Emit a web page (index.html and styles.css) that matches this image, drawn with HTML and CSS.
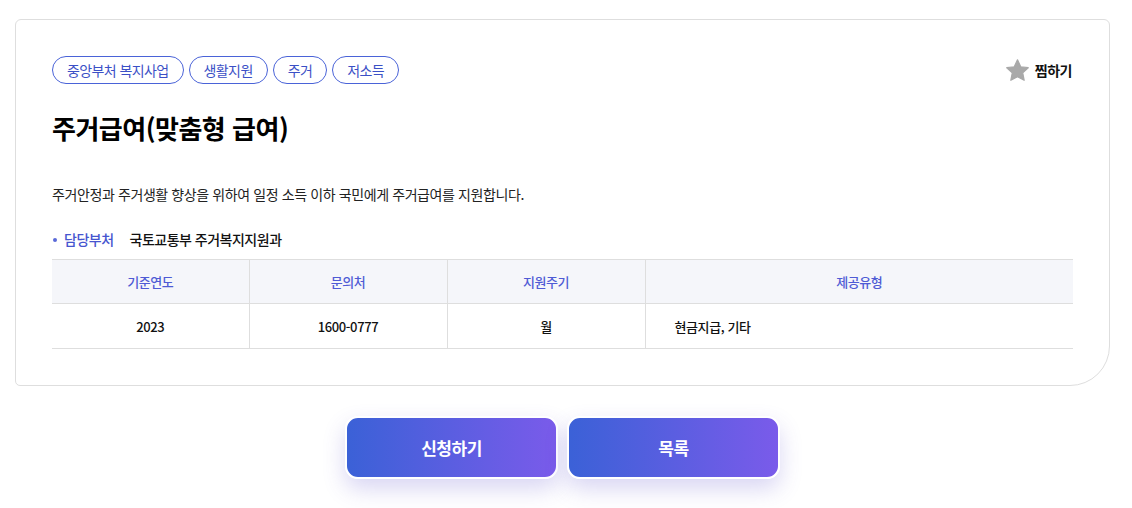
FILE: index.html
```html
<!DOCTYPE html>
<html lang="ko">
<head>
<meta charset="utf-8">
<link rel="stylesheet" href="styles.css">
</head>
<body>
<div class="page">
  <section class="card">
    <div class="top-row">
      <ul class="tags">
        <li class="tag">중앙부처 복지사업</li>
        <li class="tag">생활지원</li>
        <li class="tag">주거</li>
        <li class="tag">저소득</li>
      </ul>
      <button class="fav">
        <svg class="star" viewBox="0 0 24 24" width="25" height="25"><path d="M12 1.8l3.1 6.6 7.2.9-5.3 5 1.4 7.1L12 17.9l-6.4 3.5 1.4-7.1-5.3-5 7.2-.9z" fill="#a9a9a9" stroke="#a9a9a9" stroke-width="1.2" stroke-linejoin="round"/></svg>
        <span>찜하기</span>
      </button>
    </div>
    <h1 class="title">주거급여(맞춤형 급여)</h1>
    <p class="desc">주거안정과 주거생활 향상을 위하여 일정 소득 이하 국민에게 주거급여를 지원합니다.</p>
    <div class="dept">
      <span class="dept-label">담당부처</span>
      <span class="dept-value">국토교통부 주거복지지원과</span>
    </div>
    <table class="info">
      <thead>
        <tr><th class="c1">기준연도</th><th class="c2">문의처</th><th class="c3">지원주기</th><th class="c4">제공유형</th></tr>
      </thead>
      <tbody>
        <tr><td>2023</td><td>1600-0777</td><td>월</td><td class="left">현금지급, 기타</td></tr>
      </tbody>
    </table>
  </section>
  <div class="actions">
    <button class="btn">신청하기</button>
    <button class="btn">목록</button>
  </div>
</div>
</body>
</html>
```
FILE: styles.css
```css
* { box-sizing: border-box; }
html, body { margin: 0; padding: 0; background: #fff; }
body {
  font-family: "Noto Sans CJK KR", "Noto Sans", sans-serif;
  color: #111;
  min-height: 508px;
}
.page {
  width: 1095px;
  margin: 19px 0 0 15px;
  padding-bottom: 30px;
}
.card {
  border: 1px solid #dedede;
  border-radius: 6px 6px 40px 5px;
  padding: 36px;
  background: #fff;
}
.top-row {
  display: flex;
  justify-content: space-between;
  align-items: center;
}
.tags {
  display: flex;
  gap: 5px;
  list-style: none;
  margin: 0;
  padding: 0;
}
.tag {
  height: 28px;
  line-height: 26px;
  border: 1px solid #4a63d8;
  border-radius: 14px;
  padding: 0 14px;
  font-size: 14px;
  letter-spacing: -0.6px;
  color: #3b50c6;
}
.fav {
  display: flex;
  align-items: center;
  gap: 5px;
  border: 0;
  background: none;
  padding: 0;
  margin-right: 1px;
  font-family: inherit;
  font-size: 14px;
  font-weight: 700;
  color: #111;
  letter-spacing: -0.5px;
}
.star { display: block; }
.title {
  margin: 26px 0 0 0;
  font-size: 26px;
  line-height: 36px;
  font-weight: 700;
  letter-spacing: -0.5px;
  color: #000;
}
.desc {
  margin: 38px 0 0 0;
  font-size: 14px;
  line-height: 20px;
  letter-spacing: -0.4px;
  color: #222;
}
.dept {
  display: flex;
  align-items: center;
  margin-top: 25px;
  font-size: 14px;
  line-height: 20px;
  letter-spacing: -0.5px;
}
.dept-label {
  position: relative;
  padding-left: 12px;
  color: #4655cf;
  font-weight: 500;
}
.dept-label::before {
  content: "";
  position: absolute;
  left: 1px;
  top: 9px;
  width: 4px;
  height: 4px;
  border-radius: 50%;
  background: #5a6ad8;
}
.dept-value {
  margin-left: 16px;
  font-weight: 500;
  color: #111;
}
.info {
  width: 100%;
  margin-top: 10px;
  border-collapse: collapse;
  table-layout: fixed;
  font-size: 13px;
  letter-spacing: -0.4px;
}
.info th, .info td {
  border-top: 1px solid #dedede;
  border-bottom: 1px solid #dedede;
  border-left: 1px solid #dedede;
  text-align: center;
}
.info th:first-child, .info td:first-child { border-left: 0; }
.info th {
  height: 44px;
  background: #f5f6fa;
  color: #4f5bd5;
  font-weight: 500;
}
.info td {
  height: 45px;
  color: #111;
  font-weight: 500;
}
.info td.left { text-align: left; padding-left: 29px; }
.c1 { width: 197px; }
.c2, .c3 { width: 198px; }
.actions {
  display: flex;
  justify-content: center;
  gap: 9px;
  margin-top: 30px;
}
.btn {
  width: 213px;
  height: 63px;
  border: 2px solid #fff;
  border-radius: 13px;
  background: linear-gradient(90deg, #3b61d7 0%, #7a5bea 100%);
  box-shadow: 0 10px 22px rgba(80, 70, 200, 0.22);
  color: #fff;
  font-family: inherit;
  font-size: 17px;
  font-weight: 700;
  letter-spacing: -0.5px;
}
```
